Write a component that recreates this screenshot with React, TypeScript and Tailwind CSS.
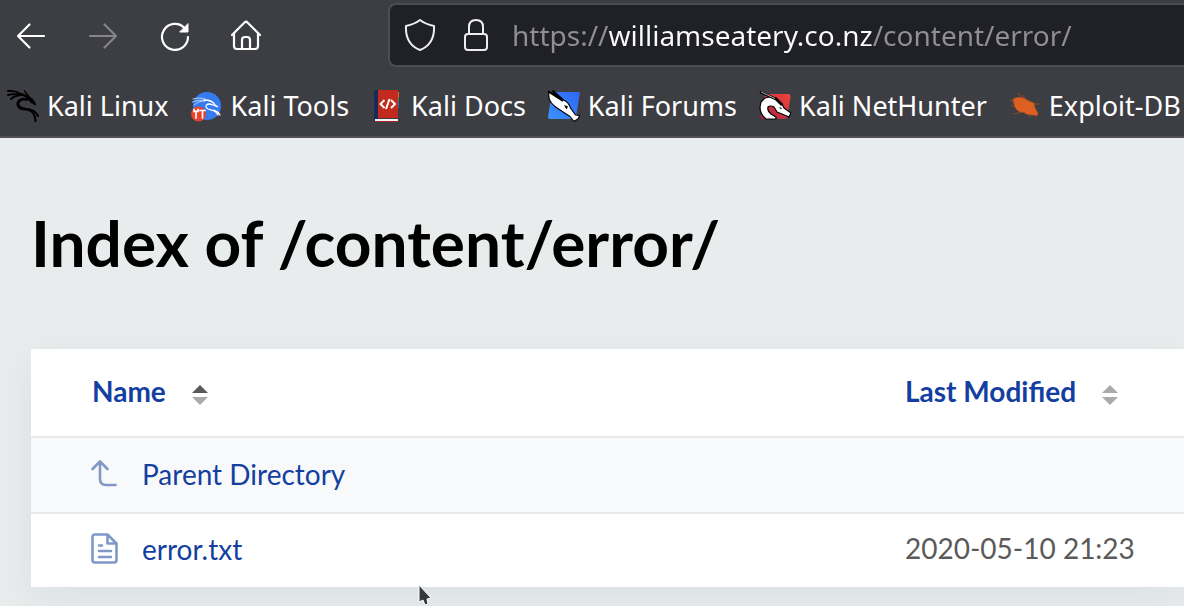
import React from "react";

function DragonIcon() {
  return (
    <svg viewBox="0 0 32 32" className="size-8 shrink-0" fill="none" stroke="#000" strokeLinecap="round" strokeLinejoin="round" aria-hidden="true">
      <path d="M1 1C6 .6 10 1.500 14 4M1 5c4-1.200 8-1.200 13-.3M4 9C6.500 6.500 9 5.500 14 5" strokeWidth="1.900" />
      <path d="M12.500 4C18 5 22 7 24.500 11" strokeWidth="2.400" />
      <path d="M17.500 1 24 9" strokeWidth="1.200" />
      <path d="m21 8 4 1 3.500 5.500-4.500-2.500z" fill="#000" strokeWidth="1.500" />
      <path d="M20 9.500C13 8 9.500 12 11.500 16c2 4 7 2.500 11 4" strokeWidth="2.800" />
      <path d="M20 19c5 .5 9 3 11 7M23 20.500c4 2.500 5.500 6 5.500 11" strokeWidth="2" />
    </svg>
  );
}

function ToolsIcon() {
  return (
    <svg viewBox="0 0 32 32" className="size-8 shrink-0" fill="none" strokeLinecap="round" aria-hidden="true">
      <circle cx="16" cy="16" r="14" fill="#367bf0" />
      <path d="M2 9c5-1.500 9-1 12 0M1.500 12c5-2 9-2 13-1.500M3 15c3-3 7-4 11-4" stroke="#b5d2fb" strokeWidth="1" />
      <path d="M13 10c5 0 9 1 11 5l3 2-5-2c-7-3-9 2-5 4 4 1.500 8 1 10 6M23 20c3 1 5 3 6 5" stroke="#fff" strokeWidth="1.300" />
      <circle cx="7.500" cy="24" r="7.500" fill="#e8432f" />
      <path d="M3 19.500v2h4v-2M5 21v7M9 20.500h5M11.500 21v7" stroke="#fff" strokeWidth="1.600" strokeLinecap="square" />
    </svg>
  );
}

function DocsIcon() {
  return (
    <svg viewBox="0 0 32 32" className="size-8 shrink-0" aria-hidden="true">
      <path d="M26 2h2v5h-2z" fill="#e8662a" />
      <path d="M26 7h2v5h-2z" fill="#3c8d4a" />
      <path d="M26 12h2v6h-2z" fill="#3667b5" />
      <path d="M3 1.500 4 0h3v32H4l-1-1.500z" fill="#172b57" />
      <path d="M7 0h20v28H7z" fill="#c22a1e" />
      <path d="M4 29h23v2H4z" fill="#f5f5f5" />
      <path d="M4 31h23v1H4z" fill="#a8211a" />
      <path d="m13.500 10-4 4 4 4M20 10l4 4-4 4M18.500 9l-3.500 10" fill="none" stroke="#fff" strokeWidth="2" />
    </svg>
  );
}

function ForumsIcon() {
  return (
    <svg viewBox="0 0 32 32" className="size-8 shrink-0" aria-hidden="true">
      <defs>
        <linearGradient id="forum" x1="0" y1="1" x2="1" y2="0">
          <stop offset="0" stopColor="#3a93ff" />
          <stop offset="1" stopColor="#2f66f0" />
        </linearGradient>
      </defs>
      <path d="M4 2h28l-4 25q-.5 2-2.500 2H2q-2 0-2-2z" fill="url(#forum)" />
      <path d="M.5 1 5 4V.5L15.500 10q5 2 7 8l5 7 4 .5-1 3-4.500 3-4-5L9 18Q2 13 1 8z" fill="#fff" stroke="#000" strokeWidth="1.200" strokeLinejoin="round" />
      <path d="M1 2 15 11M5 2l8 7" stroke="#000" strokeWidth="1.800" />
      <path d="m16 15 4 1.500-1.500 3z" fill="#000" />
    </svg>
  );
}

function NetHunterIcon() {
  return (
    <svg viewBox="0 0 32 32" className="size-8 shrink-0" aria-hidden="true">
      <defs>
        <linearGradient id="hunter" x1="1" y1="0" x2="0" y2="1">
          <stop offset="0" stopColor="#f1453b" />
          <stop offset="1" stopColor="#a82143" />
        </linearGradient>
      </defs>
      <path d="M6 4h23q3 0 2.500 3l-3 19q-.5 3-3 3H4q-3 0-2.500-3z" fill="url(#hunter)" />
      <path d="M7 29Q1 24 1 17L2 12 6 8q6-2 11 0l6 6 2 4 7 5-2 4-7-3-5-2-3-5q-4-2-6 0-1 4 3 7l5 3v2z" fill="#fff" stroke="#000" strokeWidth="1.200" strokeLinejoin="round" />
      <path d="m1 2 16 7 6 6" fill="none" stroke="#000" strokeWidth="2.600" />
      <path d="m2 2 14 6.500" stroke="#ddd" strokeWidth=".8" />
      <path d="m20 17 3 1-1 1.500z" fill="#000" />
    </svg>
  );
}

function ExploitIcon() {
  return (
    <svg viewBox="0 0 32 32" className="size-8 shrink-0" aria-hidden="true">
      <path d="M9 3l4 5M14 5l2 4M1 10l7 1M2 16l8-1M4 24l9-2M20 27l4-4M24 14h8M3 12l5 2" stroke="#8d4a2b" strokeWidth="1" />
      <path d="M4 9q5-3 11-1l5 3 5 2 1 5 3 5-1 3-4-1-6-.5-3-2q-6 0-9-5l-1-4z" fill="#dd5f21" stroke="#a14d28" strokeWidth=".6" />
    </svg>
  );
}

const bookmarks = [
  { label: "Kali Linux", icon: <DragonIcon /> },
  { label: "Kali Tools", icon: <ToolsIcon /> },
  { label: "Kali Docs", icon: <DocsIcon /> },
  { label: "Kali Forums", icon: <ForumsIcon /> },
  { label: "Kali NetHunter", icon: <NetHunterIcon /> },
  { label: "Exploit-DB", icon: <ExploitIcon /> },
];

function NavButton({ label, disabled, children }: { label: string; disabled?: boolean; children: React.ReactNode }) {
  return (
    <button type="button" aria-label={label} disabled={disabled} className="flex h-12 w-[62px] items-center justify-center text-white disabled:text-[#85858a]">
      <svg viewBox="0 0 32 32" className="size-8" fill="none" stroke="currentColor" strokeWidth="2.200" strokeLinecap="round" strokeLinejoin="round" aria-hidden="true">
        {children}
      </svg>
    </button>
  );
}

function SortArrows({ active }: { active?: boolean }) {
  return (
    <svg viewBox="0 0 16 20" className="mt-2 h-5 w-4" aria-hidden="true">
      <path d="M0 8 8 0l8 8z" fill={active ? "#5a5a5a" : "#aaa"} />
      <path d="M0 12h16l-8 8z" fill="#aaa" />
    </svg>
  );
}

export default function App() {
  return (
    <div className="relative min-h-screen overflow-hidden bg-[#e8eced] font-[Lato,sans-serif]">
      <header className="border-b-2 border-[#545056] bg-[#3d3e43] font-['Noto_Sans',sans-serif] text-white">
        <div className="flex items-center pt-[3px]">
          <nav aria-label="Navigation" className="flex w-[388px] shrink-0 gap-[10px]">
            <NavButton label="Back">
              <path d="M29 17H3M14.500 5.500 3 17l11.500 11.500" />
            </NavButton>
            <NavButton label="Forward" disabled>
              <path d="M3 17h26M17.500 5.500 29 17 17.500 28.500" />
            </NavButton>
            <NavButton label="Reload">
              <path d="M29 18A13 13 0 1 1 25.500 9" />
              <path d="M29 5v8h-8z" fill="currentColor" strokeWidth="1" />
            </NavButton>
            <NavButton label="Home">
              <path d="M1 16 13.500 3.500q1.500-1.500 3 0L29 16M3 14v13q0 3 3 3h18q3 0 3-3V14M11 30V21q0-3 3-3h2q3 0 3 3v9" />
            </NavButton>
          </nav>
          <div className="flex h-16 flex-1 items-center rounded-l-lg border-2 border-r-0 border-[#4d4e53] bg-[#202126] pl-[14px]">
            <svg viewBox="0 0 32 34" className="h-[34px] w-8 shrink-0" fill="none" stroke="#ededf0" strokeWidth="2" strokeLinejoin="round" aria-hidden="true">
              <path d="M16 2Q11 6 2 8q-1 18 14 24Q31 26 30 8 21 6 16 2z" />
            </svg>
            <svg viewBox="0 0 32 34" className="ml-6 h-[34px] w-8 shrink-0" fill="none" stroke="#ededf0" strokeWidth="2" aria-hidden="true">
              <rect x="5" y="16" width="22" height="16" rx="3" />
              <path d="M9 16V9q0-7 7-7t7 7v7" />
            </svg>
            <input
              aria-label="Address"
              defaultValue="https://williamseatery.co.nz/content/error/"
              className="ml-5 h-12 min-w-0 flex-1 bg-[linear-gradient(to_right,#8f8f94_96px,#fbfbfe_96px,#fbfbfe_361px,#8f8f94_361px)] bg-clip-text text-[28px] leading-10 text-transparent outline-none"
            />
          </div>
        </div>
        <nav aria-label="Bookmarks" className="flex h-[69px] items-center gap-[22px] overflow-hidden pt-2 pl-[7px]">
          {bookmarks.map(({ label, icon }) => (
            <a key={label} href="#" className="flex shrink-0 items-center gap-2 text-[27px] leading-9 whitespace-nowrap">
              {icon}
              {label}
            </a>
          ))}
        </nav>
      </header>

      <main className="pl-[31px]">
        <h1 className="pt-[65px] text-[64px] leading-20 font-bold text-black">Index of /content/error/</h1>
        <table className="mt-[66px] w-full table-fixed border-collapse bg-white text-left text-[28px] leading-9 text-[#5a5a5a] shadow-[0_12px_40px_rgba(20,40,70,0.06)]">
          <thead>
            <tr className="h-[88px] border-b-2 border-[#e8ebed]">
              <th className="pb-[3px] pl-[61px] font-bold">
                <a href="#" className="flex items-center gap-[26px] text-[#143fa0]">
                  Name
                  <SortArrows active />
                </a>
              </th>
              <th className="w-[279px] pb-[3px] font-bold">
                <a href="#" className="flex items-center gap-[26px] whitespace-nowrap text-[#143fa0]">
                  Last Modified
                  <SortArrows />
                </a>
              </th>
            </tr>
          </thead>
          <tbody>
            <tr className="h-[76px] border-b-2 border-[#e8ebed] bg-[#f8f9fb]">
              <td className="pb-[3px] pl-[59px]">
                <a href="#" className="flex items-center gap-6 text-[#143fa0]">
                  <svg viewBox="0 0 28 32" className="h-8 w-7" fill="none" stroke="#8098c6" strokeWidth="2.600" strokeLinecap="round" strokeLinejoin="round" aria-hidden="true">
                    <path d="M2.500 11 10 3.500l7.500 7.500M10 4v17q0 6 6 6h9.500" />
                  </svg>
                  Parent Directory
                </a>
              </td>
              <td />
            </tr>
            <tr className="h-[74px]">
              <td className="pb-[3px] pl-[59px]">
                <a href="#" className="flex items-center gap-6 text-[#143fa0]">
                  <svg viewBox="0 0 28 32" className="h-8 w-7" fill="none" stroke="#8098c6" strokeWidth="2.600" strokeLinecap="round" strokeLinejoin="round" aria-hidden="true">
                    <path d="M17.500 1.500H5q-2.500 0-2.500 2.500v23q0 2.500 2.500 2.500h19q2.500 0 2.500-2.500V10.500zv9h9M9 12.500h3M9 18h12M9 24h12" />
                  </svg>
                  error.txt
                </a>
              </td>
              <td className="pb-[6px] whitespace-nowrap">2020-05-10 21:23</td>
            </tr>
          </tbody>
        </table>
      </main>

      <svg viewBox="0 0 14 22" className="pointer-events-none absolute top-[584px] left-[418px] h-[22px] w-[14px]" aria-hidden="true">
        <path d="M1 1v17l4-2 2 5 3-1-1-5 4-1z" fill="#38383a" stroke="#fff" strokeWidth="1" strokeLinejoin="round" />
      </svg>
    </div>
  );
}
